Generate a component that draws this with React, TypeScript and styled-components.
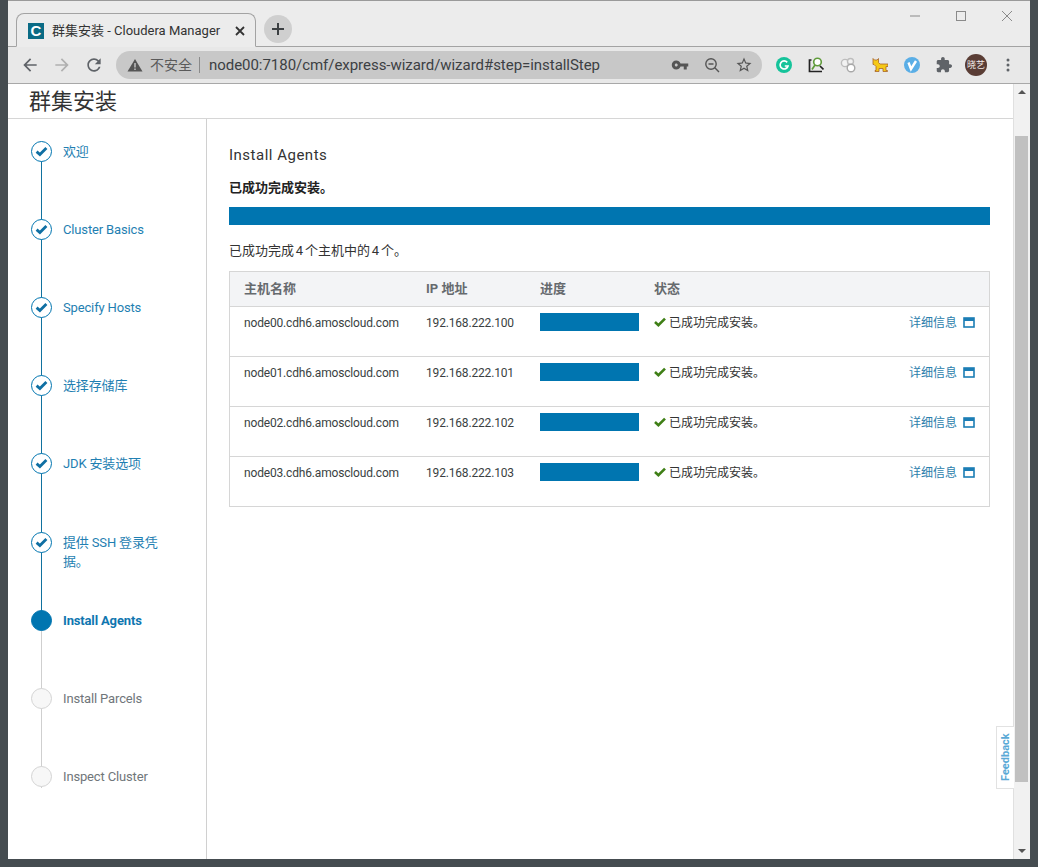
import React from "react";
import styled, { createGlobalStyle } from "styled-components";

const Global = createGlobalStyle`
  html, body { margin: 0; padding: 0; height: 100%; overflow: hidden; }
  #root { height: 100%; }
  * { box-sizing: border-box; }
  body { font-family: Roboto, "Noto Sans CJK SC", sans-serif; color: #313639; }
`;

const Frame = styled.div`
  width: 1038px; height: 867px; background: #454c50;
  padding: 0 8px 8px 8px; display: flex; flex-direction: column;
`;
const TabBar = styled.div`
  height: 47px; background: #ececec; border-top: 1px solid #9a9a9a; border-bottom: 1px solid #a3a3a3;
  display: flex; align-items: flex-end; padding-left: 8px; position: relative; flex: none;
`;
const Tab = styled.div`
  width: 240px; height: 34px; margin-bottom: -1px; background: #ececec;
  border: 1px solid #a3a3a3; border-bottom: 1px solid #ececec; border-radius: 8px 8px 0 0;
  display: flex; align-items: center; padding: 1px 0 0 11px; flex: none;
`;
const Favicon = styled.div`
  width: 16px; height: 16px; background: #0a6b85; color: #fff; font: 700 15px/16px "Liberation Sans", sans-serif;
  text-align: center; flex: none;
`;
const TabTitle = styled.span`
  margin-left: 8px; font: 13px/16px Roboto, "Noto Sans CJK SC", sans-serif; color: #333; white-space: nowrap; width: 183px;
`;
const TabClose = styled.svg` width: 10px; height: 10px; flex: none; `;
const NewTab = styled.div`
  width: 28px; height: 28px; border-radius: 50%; background: #cfcfcf; margin: 0 0 3px 8px;
  display: flex; align-items: center; justify-content: center; flex: none;
`;
const WindowControls = styled.div`
  position: absolute; right: 0; top: 0; height: 30px; display: flex; align-items: center;
`;
const WinBtn = styled.svg` width: 46px; height: 30px; display: block; `;
const Toolbar = styled.div`
  height: 37px; background: #e8e8e8; border-bottom: 1px solid #a8a8a8; display: flex; align-items: center; flex: none;
`;
const NavBtn = styled.svg` width: 20px; height: 20px; flex: none; `;
const NavGroup = styled.div`
  display: flex; align-items: center; gap: 12px; padding-left: 12px; width: 108px; flex: none;
`;
const Omnibox = styled.div`
  width: 646px; height: 28px; border-radius: 14px; background: #c8c8c8; display: flex; align-items: center;
  padding-left: 11px; flex: none;
`;
const NotSecure = styled.span`
  margin-left: 7px; font-size: 14px; color: #5a5a5a; white-space: nowrap; padding-right: 7px; border-right: 1px solid #8a8a8a; line-height: 16px;
`;
const Url = styled.span`
  margin-left: 9px; font-size: 15px; color: #3c4043; white-space: nowrap; width: 462px; letter-spacing: -0.04px;
`;
const OmniIcons = styled.div` display: flex; align-items: center; gap: 14px; `;
const OmniIcon = styled.svg` width: 18px; height: 18px; flex: none; `;
const Extensions = styled.div`
  display: flex; align-items: center; margin-left: 14px; gap: 16px;
`;
const Ext = styled.svg` width: 16px; height: 16px; flex: none; `;
const Avatar = styled.div`
  width: 22px; height: 22px; border-radius: 50%; background: #5a3d35; color: #f3eeea; font-size: 9px; line-height: 22px;
  text-align: center; flex: none; margin-left: -3px; white-space: nowrap;
`;
const Dots = styled.svg` width: 4px; height: 14px; flex: none; margin-left: 3px; `;

const Viewport = styled.div` flex: 1; display: flex; min-height: 0; background: #fff; `;
const Page = styled.div` flex: 1; display: flex; flex-direction: column; min-width: 0; `;
const PageHeader = styled.h1`
  margin: 0; height: 35px; padding-left: 21px; font-size: 22px; font-weight: 400; line-height: 35px; color: #333;
  border-bottom: 1px solid #d6d6d6; flex: none;
`;
const Body = styled.div` flex: 1; display: flex; min-height: 0; `;
const Sidebar = styled.ol`
  width: 199px; margin: 0; padding: 20px 0 0 0; list-style: none; border-right: 1px solid #d0d0d0; flex: none;
`;
const Step = styled.li`
  height: 78.12px; display: flex; padding: 3px 46px 0 55px; position: relative; font-size: 13px; line-height: 19px; letter-spacing: -0.15px;
`;
const StepLabel = styled.span<{ $state: string }>`
  color: ${p => (p.$state === "todo" ? "#70767a" : p.$state === "active" ? "#0f76b0" : "#1f7fb2")};
  font-weight: ${p => (p.$state === "active" ? 700 : 400)};
`;
const Dot = styled.span<{ $state: string }>`
  position: absolute; left: 23px; top: 2px; width: 21px; height: 21px; border-radius: 50%; z-index: 1;
  background: ${p => (p.$state === "active" ? "#0075b0" : p.$state === "done" ? "#fff" : "#f7f7f7")};
  border: 1px solid ${p => (p.$state === "todo" ? "#d4d4d4" : "#0075b0")};
  display: flex; align-items: center; justify-content: center;
`;
const Connector = styled.span<{ $done: boolean }>`
  position: absolute; left: 33px; top: 22px; height: 80px; width: 1px; background: ${p => (p.$done ? "#11729f" : "#cfcfcf")};
`;
const Main = styled.main` flex: 1; padding: 27px 23px 0 22px; min-width: 0; `;
const Title = styled.h2` margin: 0; font-size: 15px; font-weight: 400; line-height: 18px; color: #333; letter-spacing: 0.5px; `;
const Success = styled.div` margin-top: 15px; font-size: 13px; font-weight: 700; line-height: 18px; color: #222; `;
const BigBar = styled.div` margin-top: 10px; height: 18px; background: #0075b0; `;
const Summary = styled.div` margin-top: 17px; font-size: 13px; line-height: 18px; color: #333; word-spacing: -1.4px; `;
const Table = styled.div` margin-top: 11px; border: 1px solid #d6d6d6; border-bottom-width: 0; `;
const HeadRow = styled.div`
  display: grid; grid-template-columns: 182px 114px 114px 1fr; height: 35px; align-items: center; padding: 0 0 4px 14px;
  background: #f3f4f6; border-bottom: 1px solid #d6d6d6; font-size: 13px; font-weight: 700; color: #666a6e;
`;
const Row = styled.div`
  display: grid; grid-template-columns: 182px 114px 114px 1fr; height: 50px; padding-left: 14px; padding-top: 6px;
  border-bottom: 1px solid #d6d6d6; font-size: 12px; line-height: 20px; color: #3a3f42;
`;
const Mono = styled.span` letter-spacing: -0.17px; `;
const Bar = styled.div` width: 99px; height: 18px; background: #0075b0; `;
const Status = styled.div` display: flex; align-items: flex-start; color: #333; font-size: 12px; `;
const StatusCheck = styled.svg` width: 12px; height: 10px; margin: 4px 3px 0 0; flex: none; `;
const Details = styled.a`
  margin-left: auto; display: flex; color: #2b7eac; padding-right: 14px; font-size: 12px; text-decoration: none;
`;
const WinIcon = styled.svg` width: 12px; height: 11px; margin: 4px 0 0 6px; flex: none; `;

const Scrollbar = styled.div`
  width: 17px; background: #f1f1f1; border-left: 1px solid #e0e0e0; flex: none; display: flex; flex-direction: column; align-items: center; position: relative;
`;
const Arrow = styled.div<{ $down?: boolean }>`
  width: 0; height: 0; border-left: 4px solid transparent; border-right: 4px solid transparent; flex: none;
  ${p => (p.$down ? "border-top: 4px solid #555;" : "border-bottom: 4px solid #555;")}
  margin: 6px 0;
`;
const Thumb = styled.div` width: 13px; margin: 36px 1px 0 0; height: 646px; background: #c0c0c0; flex: none; `;
const Spacer = styled.div` flex: 1; `;
const Feedback = styled.div`
  position: absolute; right: 16px; top: 642px; width: 18px; height: 63px; background: #fff; border: 1px solid #e2e2e2; border-left: 0;
  writing-mode: vertical-rl; transform: rotate(180deg); font-size: 11px; font-weight: 700; color: #5aa9d6; text-align: center; line-height: 16px;
  padding-right: 1px;
`;

const Check = () => (
  <svg width="13" height="11" viewBox="0 0 13 11"><path d="M1.6 5.6 L4.9 8.6 L11.4 2" fill="none" stroke="#0f6fa3" strokeWidth="2.8" /></svg>
);

const steps: { label: string; state: string }[] = [
  { label: "欢迎", state: "done" },
  { label: "Cluster Basics", state: "done" },
  { label: "Specify Hosts", state: "done" },
  { label: "选择存储库", state: "done" },
  { label: "JDK 安装选项", state: "done" },
  { label: "提供 SSH 登录凭据。", state: "done" },
  { label: "Install Agents", state: "active" },
  { label: "Install Parcels", state: "todo" },
  { label: "Inspect Cluster", state: "todo" },
];
const hosts = ["00", "01", "02", "03"];

export default function App() {
  return (
    <>
      <Global />
      <Frame>
        <TabBar>
          <Tab>
            <Favicon>C</Favicon>
            <TabTitle>群集安装 - Cloudera Manager</TabTitle>
            <TabClose viewBox="0 0 10 10"><path d="M1 1 L9 9 M9 1 L1 9" stroke="#333" strokeWidth="1.8" /></TabClose>
          </Tab>
          <NewTab>
            <svg width="14" height="14" viewBox="0 0 14 14"><path d="M7 1 V13 M1 7 H13" stroke="#3c4043" strokeWidth="2" /></svg>
          </NewTab>
          <WindowControls>
            <WinBtn viewBox="0 0 46 30"><path d="M18 15 H28" stroke="#8a8a8a" /></WinBtn>
            <WinBtn viewBox="0 0 46 30"><rect x="18.5" y="10.5" width="9" height="9" fill="none" stroke="#8a8a8a" /></WinBtn>
            <WinBtn viewBox="0 0 46 30"><path d="M18 10 L28 20 M28 10 L18 20" stroke="#8a8a8a" /></WinBtn>
          </WindowControls>
        </TabBar>
        <Toolbar>
          <NavGroup>
            <NavBtn viewBox="0 0 24 24"><path d="M20 11H7.83l5.59-5.59L12 4l-8 8 8 8 1.41-1.41L7.83 13H20v-2z" fill="#5f6368" /></NavBtn>
            <NavBtn viewBox="0 0 24 24"><path d="M4 11h12.17l-5.59-5.59L12 4l8 8-8 8-1.41-1.41L16.17 13H4v-2z" fill="#b0b0b0" /></NavBtn>
            <NavBtn viewBox="0 0 24 24"><path d="M17.65 6.35C16.2 4.9 14.21 4 12 4c-4.42 0-7.99 3.58-7.99 8s3.57 8 7.99 8c3.73 0 6.84-2.55 7.73-6h-2.08c-.82 2.33-3.04 4-5.65 4-3.31 0-6-2.69-6-6s2.69-6 6-6c1.66 0 3.14.69 4.22 1.78L13 11h7V4l-2.35 2.35z" fill="#5f6368" /></NavBtn>
          </NavGroup>
          <Omnibox>
            <svg width="16" height="14" viewBox="0 0 16 14"><path d="M8 1 L15.5 13.5 H.5 Z" fill="#555" /><path d="M8 5 V9.5 M8 10.5 V12" stroke="#c8c8c8" strokeWidth="1.4" /></svg>
            <NotSecure>不安全</NotSecure>
            <Url>node00:7180/cmf/express-wizard/wizard#step=installStep</Url>
            <OmniIcons>
              <OmniIcon viewBox="0 0 24 24"><path d="M12.65 10C11.83 7.67 9.61 6 7 6c-3.31 0-6 2.69-6 6s2.69 6 6 6c2.61 0 4.83-1.67 5.65-4H17v4h4v-4h2v-4H12.65zM7 14c-1.1 0-2-.9-2-2s.9-2 2-2 2 .9 2 2-.9 2-2 2z" fill="#555" /></OmniIcon>
              <OmniIcon viewBox="0 0 18 18"><circle cx="8" cy="8" r="5.2" fill="none" stroke="#555" strokeWidth="1.4" /><path d="M11.8 11.8 L16 16 M5.5 8 H10.5" stroke="#555" strokeWidth="1.4" /></OmniIcon>
              <OmniIcon viewBox="0 0 24 24"><path d="M22 9.24l-7.19-.62L12 2 9.19 8.63 2 9.24l5.46 4.73L5.82 21 12 17.27 18.18 21l-1.63-7.03L22 9.24zM12 15.4l-3.76 2.27 1-4.28-3.32-2.88 4.38-.38L12 6.1l1.71 4.04 4.38.38-3.32 2.88 1 4.28L12 15.4z" fill="#555" /></OmniIcon>
            </OmniIcons>
          </Omnibox>
          <Extensions>
            <Ext viewBox="0 0 16 16"><circle cx="8" cy="8" r="8" fill="#15c39a" /><path d="M11.2 5.4 A4 4 0 1 0 12 9 H8.8" fill="none" stroke="#fff" strokeWidth="1.7" /></Ext>
            <Ext viewBox="0 0 16 16"><path d="M3.5 3 H1.5 V14.5 H14" fill="none" stroke="#222" strokeWidth="1.7" /><circle cx="9.5" cy="5" r="3.8" fill="#fff" stroke="#5f9b3a" strokeWidth="1.6" /><path d="M7 8 L4 12.5" stroke="#5f9b3a" strokeWidth="1.7" /><path d="M12 9 L15.5 12.5" stroke="#222" strokeWidth="1.7" /></Ext>
            <Ext viewBox="0 0 16 16"><circle cx="5" cy="6" r="3.6" fill="#f2f2f2" stroke="#bdbdbd" strokeWidth="1.4" /><circle cx="10.5" cy="4.5" r="3" fill="#f2f2f2" stroke="#bdbdbd" strokeWidth="1.4" /><circle cx="11" cy="11" r="3.8" fill="#fff" stroke="#a8a8a8" strokeWidth="1.4" /></Ext>
            <Ext viewBox="0 0 16 16"><path d="M1 1.5 L2.5 3 H5 L6.5 1.5 V5.5 L8 7 H16 V9.5 H14 V13.5 H15.5 V14.5 H11 V11.5 H7 V14.5 H3 V13.5 H4 V9.5 L2 7.5 H1 Z" fill="#f5c916" stroke="#a8652a" strokeWidth=".8" /></Ext>
            <Ext viewBox="0 0 16 16"><circle cx="8" cy="8" r="8" fill="#5aaee6" /><path d="M4.5 5.5 L7 12 L12 4" fill="none" stroke="#fff" strokeWidth="2.4" /></Ext>
            <Ext viewBox="1 1 22 22"><path d="M20.5 11H19V7c0-1.1-.9-2-2-2h-4V3.5C13 2.12 11.88 1 10.5 1S8 2.12 8 3.5V5H4c-1.1 0-1.99.9-1.99 2v3.8H3.5c1.49 0 2.7 1.21 2.7 2.7s-1.21 2.7-2.7 2.7H2V20c0 1.1.9 2 2 2h3.8v-1.5c0-1.49 1.21-2.7 2.7-2.7 1.49 0 2.7 1.21 2.7 2.7V22H17c1.1 0 2-.9 2-2v-4h1.5c1.38 0 2.5-1.12 2.5-2.5S21.88 11 20.5 11z" fill="#5f6368" /></Ext>
            <Avatar>晓艺</Avatar>
            <Dots viewBox="0 0 4 14"><circle cx="2" cy="2" r="1.5" fill="#5f6368" /><circle cx="2" cy="7" r="1.5" fill="#5f6368" /><circle cx="2" cy="12" r="1.5" fill="#5f6368" /></Dots>
          </Extensions>
        </Toolbar>
        <Viewport>
          <Page>
            <PageHeader>群集安装</PageHeader>
            <Body>
              <Sidebar>
                {steps.map((s, i) => (
                  <Step key={s.label}>
                    <Dot $state={s.state}>{s.state === "done" && <Check />}</Dot>
                    {i < steps.length - 1 && <Connector $done={i < 6} />}
                    <StepLabel $state={s.state}>{s.label}</StepLabel>
                  </Step>
                ))}
              </Sidebar>
              <Main>
                <Title>Install Agents</Title>
                <Success>已成功完成安装。</Success>
                <BigBar />
                <Summary>已成功完成 4 个主机中的 4 个。</Summary>
                <Table>
                  <HeadRow><span>主机名称</span><span>IP 地址</span><span>进度</span><span>状态</span></HeadRow>
                  {hosts.map((h, i) => (
                    <Row key={h}>
                      <Mono>node{h}.cdh6.amoscloud.com</Mono>
                      <Mono>192.168.222.10{i}</Mono>
                      <Bar />
                      <Status>
                        <StatusCheck viewBox="0 0 12 10"><path d="M1 5 L4.4 8.2 L11 1.6" fill="none" stroke="#3f7f16" strokeWidth="2.6" /></StatusCheck>
                        已成功完成安装。
                        <Details>详细信息
                          <WinIcon viewBox="0 0 12 11"><rect x="1" y="1" width="10" height="9" fill="none" stroke="#1b7db5" strokeWidth="1.6" /><rect x="1" y="1" width="10" height="3" fill="#1b7db5" /></WinIcon>
                        </Details>
                      </Status>
                    </Row>
                  ))}
                </Table>
              </Main>
            </Body>
          </Page>
          <Scrollbar>
            <Arrow />
            <Thumb />
            <Spacer />
            <Arrow $down />
            <Feedback>Feedback</Feedback>
          </Scrollbar>
        </Viewport>
      </Frame>
    </>
  );
}
